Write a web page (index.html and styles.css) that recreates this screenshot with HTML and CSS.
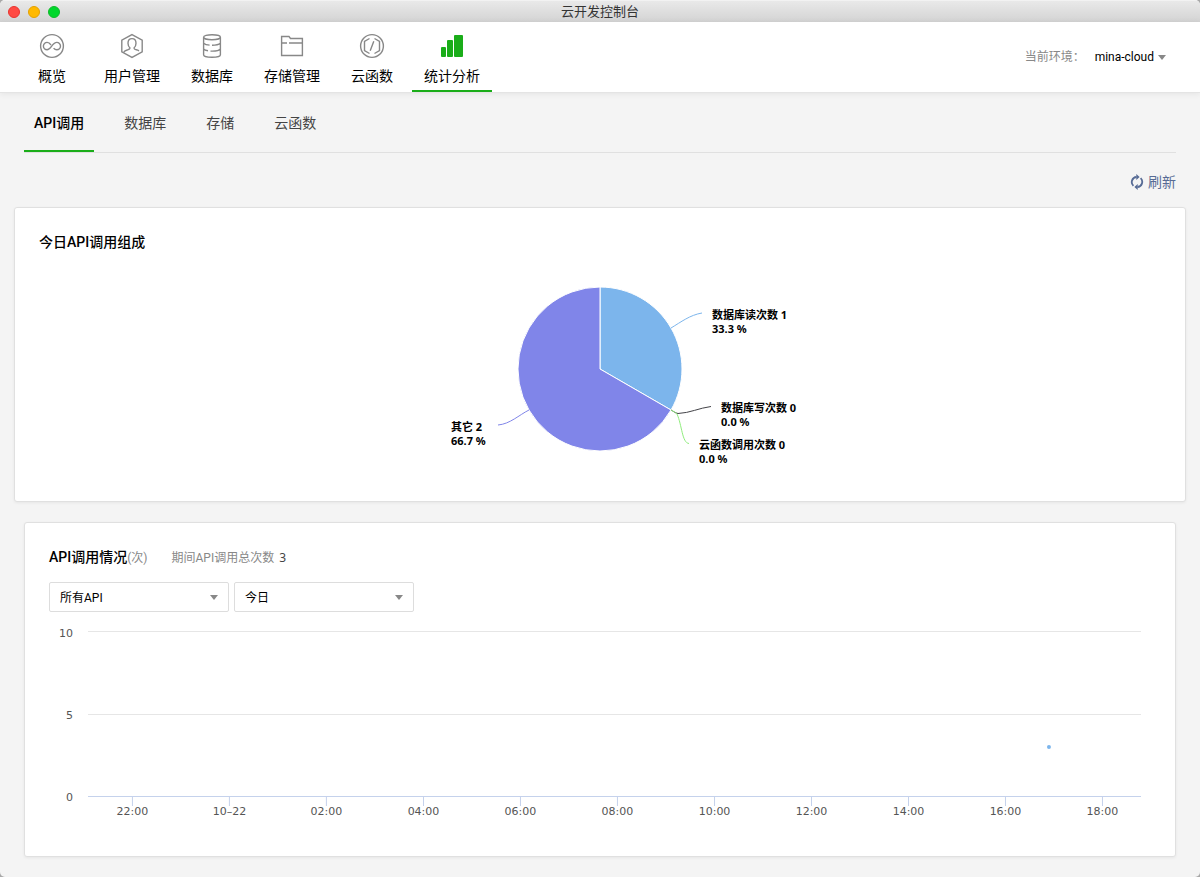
FILE: index.html
```html
<!DOCTYPE html>
<html lang="zh-CN">
<head>
<meta charset="utf-8">
<title>云开发控制台</title>
<link rel="stylesheet" href="styles.css">
</head>
<body>
<div class="window">
  <div class="titlebar">
    <div class="lights">
      <button class="light light-close" type="button" aria-label="关闭"></button>
      <button class="light light-min" type="button" aria-label="最小化"></button>
      <button class="light light-max" type="button" aria-label="缩放"></button>
    </div>
    <div class="window-title">云开发控制台</div>
    <div class="titlebar-end"></div>
  </div>

  <header class="header">
    <nav class="nav">
      <a class="nav-item" href="#">
        <svg class="nav-icon" viewBox="0 0 26 26"><circle cx="13" cy="13" r="11.4"/><path d="M12 12c-1.100-1.600-2.200-2.600-3.900-2.600a3.700 3.700 0 0 0 0 7.400c3.700 0 5.300-7.400 9.700-7.400a3.700 3.700 0 0 1 0 7.400c-1.400 0-2.400-.7-3.200-1.700"/></svg>
        <span>概览</span>
      </a>
      <a class="nav-item" href="#">
        <svg class="nav-icon" viewBox="0 0 26 26"><path d="M13 1.600l10.200 5.600v11.600L13 24.400 2.800 18.800V7.200z"/><path d="M4.500 19.500c.8-1.600 2.300-2.300 4.300-2.700 1.500-.4 2.200-.7 2.200-1.800-1.300-1-2-2.600-2-4.700 0-3 1.600-4.700 4-4.700s4 1.700 4 4.700c0 2.100-.7 3.700-2 4.700 0 1.100.7 1.500 2.200 1.800 1.100.2 2 .5 2.800 1"/></svg>
        <span>用户管理</span>
      </a>
      <a class="nav-item" href="#">
        <svg class="nav-icon" viewBox="0 0 26 26"><ellipse cx="13" cy="4.200" rx="8.400" ry="2.500"/><path d="M4.600 4.200v17.500c0 1.400 3.700 2.500 8.400 2.500s8.400-1.100 8.400-2.500V4.200M4.600 10.200c1.200 1 3.400 1.700 6 1.900M13 12.200c4 0 7-.8 8.400-2M4.600 16c.8.8 2.300 1.400 4.400 1.800M11.500 18.100c5 .2 8.800-.6 9.900-2.100"/></svg>
        <span>数据库</span>
      </a>
      <a class="nav-item" href="#">
        <svg class="nav-icon" viewBox="0 0 26 26"><path d="M2.600 22.500v-19h7.400l1.500 2h11.900v17zM2.600 10H8M10 10h13.400"/></svg>
        <span>存储管理</span>
      </a>
      <a class="nav-item" href="#">
        <svg class="nav-icon" viewBox="0 0 26 26"><circle cx="13" cy="13" r="11.400"/><path d="M10.500 5.500L5.500 8.400v9.200l5 2.900M15.500 5.500l5 2.900v9.200l-5 2.900M14.800 8.200l-3.600 9.600"/></svg>
        <span>云函数</span>
      </a>
      <a class="nav-item nav-item-active" href="#">
        <svg class="nav-icon nav-icon-solid" viewBox="0 0 26 26"><rect x="2" y="14" width="5" height="10" rx="1"/><rect x="8" y="7" width="6" height="17" rx="1"/><rect x="15" y="2" width="9" height="22" rx="1"/></svg>
        <span>统计分析</span>
      </a>
    </nav>
    <div class="env">
      <span class="env-label">当前环境：</span>
      <button class="env-button" type="button">mina-cloud<i class="caret"></i></button>
    </div>
  </header>

  <main class="main">
    <nav class="tabs">
      <a class="tab tab-active" href="#">API调用</a>
      <a class="tab" href="#">数据库</a>
      <a class="tab" href="#">存储</a>
      <a class="tab" href="#">云函数</a>
    </nav>

    <div class="toolbar">
      <button class="refresh" type="button">
        <svg class="refresh-icon" viewBox="0 0 14 16"><path d="M3.400 11.800A5.100 5.100 0 0 1 6.500 3M10.600 4.200A5.100 5.100 0 0 1 7.500 13"/><path class="refresh-head" d="M6.300 0v6L9.600 3zM7.700 16v-6L4.400 13z"/></svg>
        <span>刷新</span>
      </button>
    </div>

    <section class="card card-wide">
      <h2 class="card-title">今日API调用组成</h2>
      <svg class="pie" viewBox="390 280 420 190" role="img" aria-label="今日API调用组成">
        <path class="slice slice-read" d="M600 369V287A82 82 0 0 1 671 410z"/>
        <path class="slice slice-other" d="M600 369L671 410A82 82 0 1 1 600 287z"/>
        <path class="lead lead-read" d="M671 328C681 322 690 315 702 313"/>
        <path class="lead lead-write" d="M671 410C673 411 675 413 678 413.500C690 413 699 408 711 406.500"/>
        <path class="lead lead-func" d="M671 410C673 411 675 412 677 414C682 425 682 443 689 443.500"/>
        <path class="lead lead-other" d="M529 410C519 415 510 424 498 425"/>
        <g class="pie-text">
          <text x="712" y="319">数据库读次数 1</text>
          <text x="712" y="333">33.3 %</text>
          <text x="721" y="412">数据库写次数 0</text>
          <text x="721" y="426">0.0 %</text>
          <text x="699" y="449">云函数调用次数 0</text>
          <text x="699" y="463">0.0 %</text>
          <text x="451" y="431">其它 2</text>
          <text x="451" y="445">66.7 %</text>
        </g>
      </svg>
    </section>

    <section class="card">
      <div class="card-head">
        <h2 class="card-title">API调用情况<small class="unit">(次)</small></h2>
        <p class="summary">期间API调用总次数 <span class="summary-count">3</span></p>
      </div>
      <div class="filters">
        <div class="picker">
          <select class="picker-select" aria-label="API"><option>所有API</option></select>
        </div>
        <div class="picker">
          <select class="picker-select" aria-label="时间"><option>今日</option></select>
        </div>
      </div>
      <svg class="chart" role="img" aria-label="API调用情况">
        <g class="grid"><line x1="0" x2="100%" y1="8.500" y2="8.500"/><line x1="0" x2="100%" y1="91.500" y2="91.500"/></g>
        <g class="axis">
          <line x1="0" x2="100%" y1="173.500" y2="173.500"/>
          <line x1="4.220%" x2="4.220%" y1="173" y2="183"/>
          <line x1="13.430%" x2="13.430%" y1="173" y2="183"/>
          <line x1="22.640%" x2="22.640%" y1="173" y2="183"/>
          <line x1="31.860%" x2="31.860%" y1="173" y2="183"/>
          <line x1="41.070%" x2="41.070%" y1="173" y2="183"/>
          <line x1="50.280%" x2="50.280%" y1="173" y2="183"/>
          <line x1="59.500%" x2="59.500%" y1="173" y2="183"/>
          <line x1="68.710%" x2="68.710%" y1="173" y2="183"/>
          <line x1="77.920%" x2="77.920%" y1="173" y2="183"/>
          <line x1="87.130%" x2="87.130%" y1="173" y2="183"/>
          <line x1="96.340%" x2="96.340%" y1="173" y2="183"/>
        </g>
        <g class="y-text"><text x="-15" y="14">10</text><text x="-15" y="96">5</text><text x="-15" y="178">0</text></g>
        <g class="x-text">
          <text x="4.220%" y="192">22:00</text>
          <text x="13.430%" y="192">10–22</text>
          <text x="22.640%" y="192">02:00</text>
          <text x="31.860%" y="192">04:00</text>
          <text x="41.070%" y="192">06:00</text>
          <text x="50.280%" y="192">08:00</text>
          <text x="59.500%" y="192">10:00</text>
          <text x="68.710%" y="192">12:00</text>
          <text x="77.920%" y="192">14:00</text>
          <text x="87.130%" y="192">16:00</text>
          <text x="96.340%" y="192">18:00</text>
        </g>
        <circle class="point" cx="91.260%" cy="124" r="2"/>
      </svg>
    </section>
  </main>
</div>
</body>
</html>
```
FILE: styles.css
```css
* {
  box-sizing: border-box;
}

body {
  margin: 0;
  background: #a8a8a8;
  color: #000;
  font: 14px/20px Roboto, "Noto Sans CJK SC", sans-serif;
}

h2,
p {
  margin: 0;
}

a {
  color: inherit;
  text-decoration: none;
}

button {
  padding: 0;
  border: 0;
  background: none;
  color: inherit;
  font: inherit;
}

svg {
  display: block;
}

.window {
  min-height: 100vh;
  overflow: hidden;
  border-radius: 5px;
  background: #f4f4f4;
}

/* Title bar */
.titlebar {
  display: flex;
  align-items: center;
  height: 22px;
  padding: 0 8px;
  border-top: 1px solid #f2f2f2;
  background: linear-gradient(#e9e9e9, #d3d3d3);
}

.lights,
.titlebar-end {
  display: flex;
  flex: 1;
  gap: 8px;
}

.light {
  width: 12px;
  height: 12px;
  border: 1px solid;
  border-radius: 50%;
}

.light-close {
  border-color: #e8342f;
  background: #ff4a43;
}

.light-min {
  border-color: #e5a100;
  background: #ffb900;
}

.light-max {
  border-color: #0fb92a;
  background: #00d72b;
}

.window-title {
  color: #333;
  font-size: 13px;
}

/* Header */
.header {
  position: relative;
  display: flex;
  justify-content: space-between;
  align-items: center;
  padding: 0 34px 0 12px;
  border-bottom: 1px solid #e4e4e4;
  background: #fff;
  box-shadow: 0 1px 6px rgba(0, 0, 0, 0.07);
}

.nav {
  display: flex;
}

.nav-item {
  display: flex;
  flex-direction: column;
  align-items: center;
  gap: 7px;
  width: 80px;
  padding: 11px 0 4px;
  border-bottom: 2px solid transparent;
}

.nav-item-active {
  border-color: #1aad19;
}

.nav-icon {
  width: 26px;
  height: 26px;
  fill: none;
  stroke: #888;
  stroke-width: 1.4;
}

.nav-icon-solid {
  fill: #1aad19;
  stroke: none;
}

.env {
  display: flex;
  gap: 10px;
  font-size: 12px;
}

.env-label {
  color: #888;
}

.env-button {
  display: flex;
  align-items: center;
  gap: 4px;
}

.caret,
.picker::after {
  width: 0;
  border: 4px solid transparent;
  border-top: 5px solid #888;
  border-bottom: 0;
}

/* Content */
.main {
  padding: 0 24px 20px;
}

.tabs {
  display: flex;
  gap: 20px;
  border-bottom: 1px solid #e0e0e0;
  color: #444;
}

.tab {
  padding: 20px 10px 17px;
  border-bottom: 2px solid transparent;
}

.tab-active {
  border-color: #1aad19;
  color: #000;
  font-weight: 500;
}

.toolbar {
  display: flex;
  justify-content: flex-end;
  padding: 19px 0 15px;
}

.refresh {
  display: flex;
  align-items: center;
  gap: 4px;
  color: #576b95;
}

.refresh-icon {
  width: 14px;
  height: 16px;
  fill: none;
  stroke: #576b95;
  stroke-width: 1.8;
}

.refresh-head {
  fill: #576b95;
  stroke: none;
}

.card {
  padding: 24px;
  border: 1px solid #e0e0e0;
  border-radius: 3px;
  background: #fff;
  box-shadow: 0 1px 3px rgba(0, 0, 0, 0.06);
}

.card-wide {
  margin: 0 -10px 20px;
}

.card-title {
  font-size: 14px;
  font-weight: 500;
}

.pie {
  width: 420px;
  height: 190px;
  margin: 28px auto 7px;
}

.slice {
  stroke: #fff;
  stroke-linejoin: round;
}

.slice-read {
  fill: #7cb5ec;
}

.slice-other {
  fill: #8085e9;
}

.lead {
  fill: none;
  stroke-width: 1;
}

.lead-read {
  stroke: #7cb5ec;
}

.lead-write {
  stroke: #434348;
}

.lead-func {
  stroke: #90ed7d;
}

.lead-other {
  stroke: #8085e9;
}

.pie-text {
  font: bold 11px "Noto Sans", "Noto Sans CJK SC", sans-serif;
}

.card-head {
  display: flex;
  gap: 24px;
}

.unit {
  color: #888;
  font-size: 12px;
  font-weight: 400;
}

.summary {
  color: #888;
  font-size: 12px;
  line-height: 22px;
}

.summary-count {
  margin-left: 2px;
  color: #444;
  font-family: "Noto Sans", sans-serif;
}

.filters {
  display: flex;
  gap: 5px;
  margin-top: 13px;
}

.picker {
  position: relative;
  width: 180px;
}

.picker::after {
  position: absolute;
  top: 13px;
  right: 11px;
  content: "";
  pointer-events: none;
}

.picker-select {
  width: 100%;
  height: 30px;
  padding: 1px 10px 0;
  border: 1px solid #ddd;
  border-radius: 2px;
  background: #fff;
  color: #000;
  font: inherit;
  font-size: 12px;
  appearance: none;
}

.chart {
  width: calc(100% - 49px);
  height: 200px;
  margin: 11px 10px 9px 39px;
  overflow: visible;
  font: 11px "DejaVu Sans", sans-serif;
  fill: #555;
}

.grid {
  stroke: #e6e6e6;
}

.axis {
  stroke: #c5d2ec;
}

.x-text {
  text-anchor: middle;
}

.y-text {
  text-anchor: end;
}

.point {
  fill: #7cb5ec;
}
```
